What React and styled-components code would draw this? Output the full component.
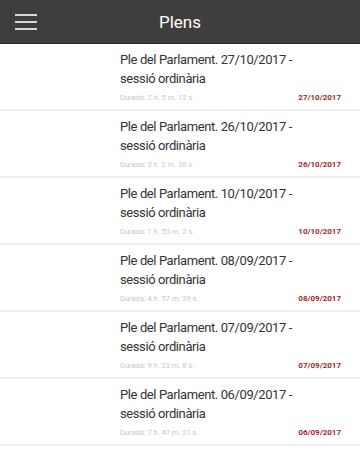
import styled, { createGlobalStyle } from "styled-components";

const Global = createGlobalStyle`
  body {
    margin: 0;
    background: #ffffff;
    font-family: Roboto, "Open Sans", sans-serif;
  }
`;

const Page = styled.div`
  width: 360px;
  height: 450px;
  overflow: hidden;
  background: #ffffff;
`;

const Header = styled.header`
  height: 43px;
  background: #403e3c;
  display: flex;
  align-items: center;
  border-bottom: 1px solid #2e2d2b;
`;

const MenuButton = styled.div`
  width: 22px;
  margin-left: 15px;
  display: flex;
  flex-direction: column;
  gap: 5px;

  span {
    display: block;
    height: 2px;
    background: #d8d8d8;
  }
`;

const Title = styled.h1`
  flex: 1;
  margin: 0 0 0 -37px;
  text-align: center;
  color: #ffffff;
  font-size: 17px;
  font-weight: 400;
`;

const List = styled.div`
  display: flex;
  flex-direction: column;
`;

const Item = styled.div`
  height: 67px;
  padding: 6px 19px 0 120px;
  box-sizing: border-box;
  border-bottom: 2px solid #f0f0f0;
  display: flex;
  flex-direction: column;
`;

const ItemTitle = styled.div`
  font-size: 13px;
  line-height: 19px;
  letter-spacing: -0.4px;
  color: #333333;
  white-space: nowrap;
`;

const Meta = styled.div`
  display: flex;
  justify-content: space-between;
  align-items: baseline;
  margin-top: 5px;
`;

const Duration = styled.span`
  font-size: 7.5px;
  color: #c8c8c8;
`;

const DateLabel = styled.span`
  font-size: 8px;
  font-weight: 700;
  color: #a1262b;
`;

const sessions = [
  { date: "27/10/2017", duration: "2 h. 5 m. 12 s." },
  { date: "26/10/2017", duration: "3 h. 2 m. 36 s." },
  { date: "10/10/2017", duration: "1 h. 53 m. 2 s." },
  { date: "08/09/2017", duration: "4 h. 57 m. 39 s." },
  { date: "07/09/2017", duration: "9 h. 23 m. 8 s." },
  { date: "06/09/2017", duration: "7 h. 47 m. 21 s." },
];

export default function App() {
  return (
    <Page>
      <Global />
      <Header>
        <MenuButton>
          <span />
          <span />
          <span />
        </MenuButton>
        <Title>Plens</Title>
      </Header>
      <List>
        {sessions.map((s) => (
          <Item key={s.date}>
            <ItemTitle>
              Ple del Parlament. {s.date} -
              <br />
              sessió ordinària
            </ItemTitle>
            <Meta>
              <Duration>Durada: {s.duration}</Duration>
              <DateLabel>{s.date}</DateLabel>
            </Meta>
          </Item>
        ))}
      </List>
    </Page>
  );
}
